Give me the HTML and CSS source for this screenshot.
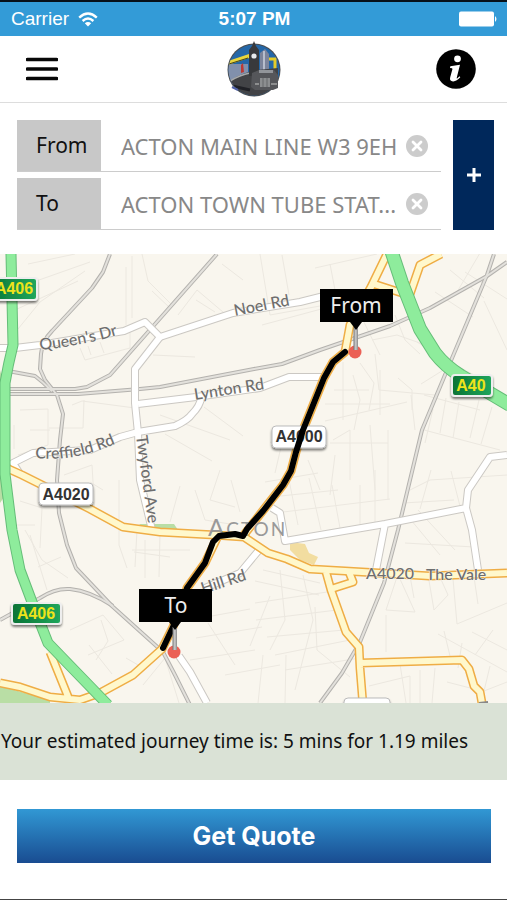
FILE: index.html
```html
<!DOCTYPE html>
<html lang="en">
<head>
<meta charset="utf-8">
<meta name="viewport" content="width=device-width, initial-scale=1">
<title>Journey quote</title>
<link rel="stylesheet" href="styles.css">
</head>
<body>
<div class="status">
  <div class="carrier"><span>Carrier</span>
    <svg width="20" height="15" viewBox="0 0 20 15" aria-hidden="true"><g fill="none" stroke="#fff" stroke-width="2.4"><path d="M1.2 5.6Q10-2.4 18.800 5.600"/><path d="M4.600 9Q10 4.200 15.400 9"/></g><path d="M6.800 11.200Q10 8.600 13.200 11.200L10 14.500Z" fill="#fff"/></svg>
  </div>
  <div class="clock">5:07 PM</div>
  <svg class="battery" width="39" height="16" viewBox="0 0 39 16" aria-hidden="true"><rect x="0" y="0.500" width="35" height="15" rx="2" fill="#fff"/><path d="M36 5Q39 8 36 11Z" fill="#fff"/></svg>
</div>
<header class="top">
  <button class="icon-btn" type="button" aria-label="Menu">
    <svg width="32" height="24" viewBox="0 0 32 24"><path d="M1.500 2.500H30.500M1.500 12H30.500M1.500 21.500H30.500" stroke="#080808" stroke-width="3.600" stroke-linecap="round"/></svg>
  </button>
  <svg class="logo" width="56" height="56" viewBox="0 0 56 56" aria-hidden="true">
    <defs><clipPath id="disc"><circle cx="28" cy="29" r="25.500"/></clipPath></defs>
    <circle cx="28" cy="29" r="26.500" fill="#4b4d50"/>
    <g clip-path="url(#disc)">
      <rect width="56" height="56" fill="#2467a8"/>
      <path d="M0 23H22V44H0Z" fill="#8190ac"/>
      <path d="M2 20L23 13V17L2 24Z" fill="#e8d53c"/>
      <path d="M3 23L22 17" stroke="#43401e"/>
      <path d="M15 24L17 22L18 31L15 32Z" fill="#bd3934"/>
      <path d="M34 12L39 8L43 13V33H34Z" fill="#7c849b"/>
      <path d="M38 10V33" stroke="#b7bdcc" stroke-width="2"/>
      <path d="M43 18H49V31" fill="none" stroke="#e5cc28" stroke-width="3"/>
      <path d="M3 40Q15 32 31 29L52 27V50L28 56L7 49Z" fill="#424346"/>
      <path d="M4 40Q14 34 24 32" stroke="#a7a9ab" stroke-width="1.500" fill="none"/>
      <path d="M6 45L24 49" stroke="#202126" stroke-width="3"/>
    </g>
    <path d="M23 35V9L26 5L28 0L30 5L33 9V35Z" fill="#38393c"/>
    <circle cx="28" cy="15" r="2.600" fill="#e8eaec"/>
    <path d="M26 32L33 29H48L52 34V47L47 49H29L25 46Z" fill="#55565a"/>
    <path d="M33 29H47V32H33Z" fill="#92959a"/>
    <path d="M34 37H44V46H34Z" fill="#8c8e90"/>
    <path d="M37 37V46M41 37V46" stroke="#67696b"/>
    <path d="M29 43H33M45 43H51" stroke="#a0a1a1" stroke-width="1.500"/>
    <path d="M6 46L12 49" stroke="#5262a7" stroke-width="2"/>
  </svg>
  <button class="icon-btn info" type="button" aria-label="Information">
    <svg width="40" height="40" viewBox="0 0 40 40"><circle cx="20" cy="20" r="19.800" fill="#000"/><circle cx="21.500" cy="9.800" r="3.400" fill="#fff"/><path d="M14.300 17.300L24 15.800L20.800 28.500Q20.400 30 21.400 29.200L23.500 27.200L24.300 28.300Q20.500 32.600 17 32.400Q13.200 32 14.200 28.300L16.400 20.300Q16.800 18.900 14 18.900Z" fill="#fff"/></svg>
  </button>
</header>
<main>
  <form class="journey">
    <div class="fields">
      <div class="field">
        <label for="from">From</label>
        <input id="from" type="text" value="ACTON MAIN LINE W3 9EH">
        <button class="clear" type="button" aria-label="Clear from"><svg width="22" height="22" viewBox="0 0 22 22"><circle cx="11" cy="11" r="11" fill="#ccc"/><path d="M7 7L15 15M15 7L7 15" stroke="#fff" stroke-width="2.800" stroke-linecap="round"/></svg></button>
      </div>
      <div class="field">
        <label for="to">To</label>
        <input id="to" type="text" value="ACTON TOWN TUBE STAT...">
        <button class="clear" type="button" aria-label="Clear to"><svg width="22" height="22" viewBox="0 0 22 22"><circle cx="11" cy="11" r="11" fill="#ccc"/><path d="M7 7L15 15M15 7L7 15" stroke="#fff" stroke-width="2.800" stroke-linecap="round"/></svg></button>
      </div>
    </div>
    <button class="add" type="button" aria-label="Add stop"><svg width="14" height="14" viewBox="0 0 14 14"><path d="M7 0V14M0 7H14" stroke="#fff" stroke-width="3"/></svg></button>
  </form>
  <svg class="map" viewBox="0 254 507 449" role="img" aria-label="Route map">
    <defs>
      <linearGradient id="shield" x1="0" y1="0" x2="1" y2="0"><stop offset="0" stop-color="#087335"/><stop offset="1" stop-color="#21a75c"/></linearGradient>
      <linearGradient id="pin"><stop stop-color="#777"/><stop offset=".5" stop-color="#ccc"/><stop offset="1" stop-color="#888"/></linearGradient>
      <filter id="shadow" x="-20%" y="-20%" width="140%" height="160%"><feDropShadow dx="0" dy="2" stdDeviation="1" flood-opacity=".5"/></filter>
      <path id="queens" d="M40 350Q83 346 128 332"/>
      <path id="creffield" d="M35 458Q80 463 130 437"/>
      <g id="rails">
        <path d="M110 254L103 272L92 288L52 331Q42 341 41 354L40 369L45 380L57 395L63 414L60 440L57 480L59 513L67 545L76 568L112 606L163 652L175 675L190 705"/>
        <path d="M217 254L110 375L87 387L75 389H8"/>
        <path d="M8 394H78L140 389L160 387L254 369L282 364L320 350L390 326L430 308L487 276L507 262"/>
        <path d="M8 371L35 376Q43 382 52 391"/>
        <path d="M494 254L487 275L450 363L422 430L410 480L398 530L384 583L360 642L342 673L320 703"/>
        <path d="M0 620L40 598Q55 588 70 589Q90 591 113 606"/>
      </g>
      <g id="streets">
        <path d="M0 348H15L40 345L124 331L145 322L160 337L233 313L300 302L328 295"/>
        <path d="M160 337L135 369V403L138 433L140 480L152 530"/>
        <path d="M138 404L196 397L260 388L289 377L323 377"/>
        <path d="M138 432L175 426Q188 420 192 414Q200 406 201 398M138 432L120 437L90 450L33 453L13 463L20 474"/>
        <path d="M272 508L280 513L285 541L385 524L466 508L468 490L490 457L507 455M466 508L472 530L478 570M385 524L376 570"/>
        <path d="M259 550L240 573L205 588M179 656L190 672L207 703"/>
      </g>
      <g id="mains">
        <path d="M0 465L22 475L42 485L90 509L123 527L160 532L215 535L244 537L253 543L268 553L287 559L310 569L345 571L430 576L507 573"/>
        <path d="M387 254L371 287L350 325L345 352L333 362L324 378L303 430L296 452L291 471L283 485L243 536M374 284L405 294"/>
        <path d="M410 294L420 265L441 254"/>
        <path d="M218 536L205 563L187 588L173 627L162 649L133 675L100 693L80 700L50 697L20 687L0 683M50 652L69 699"/>
        <path d="M326 572L331 590L346 632L359 647L360 668L363 705M331 589L353 582L349 572M360 663L462 660L469 669L474 686L480 692L482 703"/>
      </g>
      <path id="a406" d="M11 254L13 345Q8 365 5 383V474L12 530L20 570L35 610L48 643L77 673L108 705"/>
      <path id="a40" d="M391 250L402 283L420 329L435 353Q445 366 461 376L510 405"/>
    </defs>
    <rect y="254" width="507" height="449" fill="#f9f6ee"/>
    <g class="park"><path d="M0 370L4 385V497L0 503ZM0 686L50 700V703H0Z"/><path d="M139 524H174L178 530H148Z"/><path d="M290 542L305 544L309 553L318 557L314 565L300 560L290 550Z" fill="#f2dda0"/></g>
    <g class="lanes">
      <path d="M28 264L75 254M22 286L90 262M15 310L78 281M126 267V325M132 256V318M142 254L148 281L173 306M152 291L170 308M178 315L197 290L230 318M196 300L215 312M222 264L243 280M18 329L40 302L85 271M80 348L85 360L130 348V330M88 346L91 355M100 342L104 353M153 355L195 357M20 410L48 409V445L18 455M72 405L82 401L135 408M84 400L83 428H49M160 415L230 440M165 434L212 461M204 407L243 436M30 430H50M64 475L92 465L95 515M14 425V449"/>
      <path d="M260 254L270 315L320 306M282 255L289 295M315 268L377 254M330 264L335 290M262 325L325 308M360 314L380 355M372 340L397 335L440 350M375 354L379 390L435 395M395 315L405 340L420 354M417 342L446 360M435 292L473 317M450 270L484 298M440 302L457 292L480 253M465 272L507 299M484 301L507 350M343 362V420M353 375L360 400L354 430M360 363L374 383L369 410M380 370V415M398 378L412 390V410M334 390H369M325 404H390M325 421L407 402M333 440L350 430V480M370 425L375 490M388 430V500M330 443H388M421 384L453 364L490 383M424 395L480 410M433 409L425 443M446 398L440 433M459 402L453 438M479 400L470 438M492 407L481 444M424 430L500 450M411 395L415 430M270 442L281 447L275 473M308 460L320 490M335 455L330 495"/>
      <path d="M20 501L42 508L40 548M15 525H35M25 530L42 560L68 578M38 567L61 557M30 535L47 590M90 482L103 490M119 480V545L127 568M134 552L170 557M137 530L135 567M145 540V578M160 533L159 577M132 550H190M195 490L205 520L230 524M220 470L210 500L235 507M231 480L240 512M180 486L170 522M70 630L103 615L124 640L88 655M101 620L108 641L96 660M89 645L112 674M126 658L145 669M143 685L165 658L179 703M190 620L250 609M196 638L262 627M208 623L235 665M190 660L255 650M225 675L280 665M263 655L258 703M286 655L285 703"/>
      <path d="M265 482L318 473M271 497L338 490M275 513L390 499M289 480L298 525M309 478L321 530M332 485L340 528M360 485V530M375 470V522M403 503L454 500M410 490L430 480L507 475M431 470L420 509M451 471L461 510M418 510L455 550M411 520L440 555M405 543L474 547M263 570L320 583M255 581L319 595M255 603L327 592M256 620L337 610M267 637L344 630M275 655L350 640M285 670L360 658M280 570L285 620L270 650M303 575L313 620L295 690M315 607L317 650L350 677M270 596L250 646M397 577L386 610L415 612L400 579M410 576L414 598M428 575L434 610L448 595L439 575M453 579L457 624L507 603M474 577L478 604M438 634L507 672M444 631L450 656M462 643L458 668M475 655L493 630M472 632L507 650M386 615V652M420 670V703M369 686L410 676V703M400 664L406 703M435 668L432 703M447 682L474 689M490 666L484 691L507 682"/>
    </g>
    <use href="#rails" class="rail-edge"/><use href="#rails" class="rail-core"/>
    <use href="#streets" class="street-edge"/><use href="#streets" class="street-core"/>
    <use href="#mains" class="main-edge"/><use href="#mains" class="main-core"/>
    <use href="#a406" class="green-edge" stroke-width="11"/><use href="#a406" class="green-core" stroke-width="9"/>
    <use href="#a40" class="green-edge" stroke-width="14"/><use href="#a40" class="green-core" stroke-width="12"/>
    <g class="road-names">
      <text><textPath href="#queens">Queen's Dr</textPath></text>
      <text transform="translate(235 316) rotate(-11)">Noel Rd</text>
      <text transform="translate(195 400) rotate(-9)">Lynton Rd</text>
      <text><textPath href="#creffield">Creffield Rd</textPath></text>
      <text transform="translate(136 436) rotate(82)">Twyford Ave</text>
      <text transform="translate(203 594) rotate(-18)">Hill Rd</text>
      <text x="366" y="579">A4020</text><text x="426" y="580">The Vale</text>
    </g>
    <text class="district" x="208" y="536">A<tspan class="caps">CTON</tspan></text>
    <g filter="url(#shadow)" class="white-badges">
      <rect x="39" y="483" width="54" height="22" rx="4"/><rect x="272" y="426" width="54" height="22" rx="4"/><rect x="344" y="698" width="46" height="22" rx="4"/>
    </g>
    <g class="badge-text"><text x="66" y="500">A4020</text><text x="299" y="442">A4000</text></g>
    <g filter="url(#shadow)" class="green-badges">
      <rect x="-14" y="278" width="51" height="22" rx="3"/><rect x="12" y="603" width="49" height="21" rx="3"/><rect x="452" y="375" width="40" height="21" rx="3"/>
    </g>
    <g class="badge-text yellow"><text x="14" y="294">A406</text><text x="36" y="619">A406</text><text x="471" y="391">A40</text></g>
    <path class="route" d="M345 352L333 362L324 378L303 430L296 452L291 471L283 485L263 511L247 529L243 536L235 534L219 536L213 542L205 563L187 588L173 627L163 648"/>
    <g>
      <circle cx="355" cy="352" r="6.500" fill="#eb6055"/><path d="M353.500 327H358V350H353.500Z" fill="url(#pin)"/>
      <path d="M320 289H393V322H362L356 330L350 322H320Z"/>
      <circle cx="174" cy="652" r="6.500" fill="#eb6055"/><path d="M172.500 627H177V650H172.500Z" fill="url(#pin)"/>
      <path d="M139 589H212V622H181L175 630L169 622H139Z"/>
    </g>
    <g class="pin-text"><text x="356" y="313">From</text><text x="176" y="613">To</text></g>
    <path d="M479 703L488 702" stroke="#888" stroke-width="2"/>
  </svg>
  <p class="estimate">Your estimated journey time is: 5 mins for 1.19 miles</p>
  <div class="actions"><button class="quote" type="button">Get Quote</button></div>
</main>
</body>
</html>
```
FILE: styles.css
```css
* { box-sizing: border-box; }
body {
  margin: 0;
  min-height: 100vh;
  display: flex;
  flex-direction: column;
  background: #fff;
  border-top: 2px solid #071019;
  border-bottom: 1px solid #444;
  color: #111;
  font-family: "Noto Sans", sans-serif;
}
button { border: 0; padding: 0; background: none; cursor: pointer; }
svg { display: block; }

.status {
  display: grid;
  grid-template-columns: 1fr auto 1fr;
  align-items: center;
  height: 34px;
  padding: 0 9px 0 11px;
  background: #339bd7;
  color: #fff;
  font: 19px/32px "Liberation Sans", sans-serif;
}
.carrier { display: flex; align-items: center; gap: 9px; }
.clock { font-weight: bold; font-size: 19px; }
.battery { justify-self: end; }

.top {
  display: grid;
  grid-template-columns: 1fr auto 1fr;
  align-items: center;
  height: 67px;
  padding: 0 26px;
  border-bottom: 1px solid #ddd;
}
.icon-btn { justify-self: start; }
.info { justify-self: end; padding-right: 5px; }

.journey { display: flex; gap: 12px; padding: 17px 13px 24px 17px; }
.fields { flex: 1; min-width: 0; display: flex; flex-direction: column; gap: 6px; }
.field {
  display: flex;
  align-items: center;
  height: 52px;
  padding-right: 13px;
  border-bottom: 1px solid #ccc;
}
.field label {
  align-self: stretch;
  width: 84px;
  padding-left: 19px;
  background: #c8c8c8;
  font-size: 21px;
  line-height: 51px;
}
.field input {
  flex: 1;
  min-width: 0;
  height: 48px;
  border: 0;
  outline: 0;
  padding: 0 0 0 20px;
  background: none;
  color: #888;
  font: 22px "Noto Sans", sans-serif;
}
.add { width: 41px; display: grid; place-items: center; background: #00285b; }

.map { width: 100%; height: auto; overflow: hidden; }
.park { fill: #b9dea5; }
.lanes, .rail-edge, .rail-core, .street-edge, .street-core, .main-edge, .main-core, .green-edge, .green-core, .route { fill: none; stroke-linejoin: round; }
.lanes { stroke: #ece8e0; stroke-width: 1; }
.rail-edge { stroke: #b4b2ae; stroke-width: 4; }
.rail-core { stroke: #e3e1dc; stroke-width: 2; }
.street-edge { stroke: #cbc8c3; stroke-width: 8; }
.street-core { stroke: #fff; stroke-width: 6; }
.main-edge { stroke: #efad45; stroke-width: 9; }
.main-core { stroke: #fff8cc; stroke-width: 6; }
.green-edge { stroke: #65bd78; }
.green-core { stroke: #8eec9c; }
.route { stroke: #000; stroke-width: 6; stroke-linecap: round; }
.road-names { fill: #6e6e6e; font: 500 16px Lato, sans-serif; stroke: #f9f6ee; stroke-width: 1; paint-order: stroke; }
.district { fill: #999; font: 24px Lato, sans-serif; letter-spacing: 2px; }
.caps { font-size: 19px; }
.white-badges { fill: #fff; stroke: #bbb; }
.green-badges { fill: url(#shield); stroke: #eee; stroke-width: 2; }
.badge-text { fill: #333; text-anchor: middle; font: bold 16px "Liberation Sans", sans-serif; }
.yellow { fill: #eee31b; }
.pin-text { fill: #eee; text-anchor: middle; font: 21px "Noto Sans", sans-serif; }

.estimate { margin: 0; padding: 0 1px; background: #dae2d6; font-size: 19px; line-height: 77px; }
.actions { padding: 29px 16px 36px 17px; }
.quote {
  width: 100%;
  height: 54px;
  background: linear-gradient(#3198d4, #194c91);
  color: #fff;
  font: bold 25px Inter, sans-serif;
}
```
